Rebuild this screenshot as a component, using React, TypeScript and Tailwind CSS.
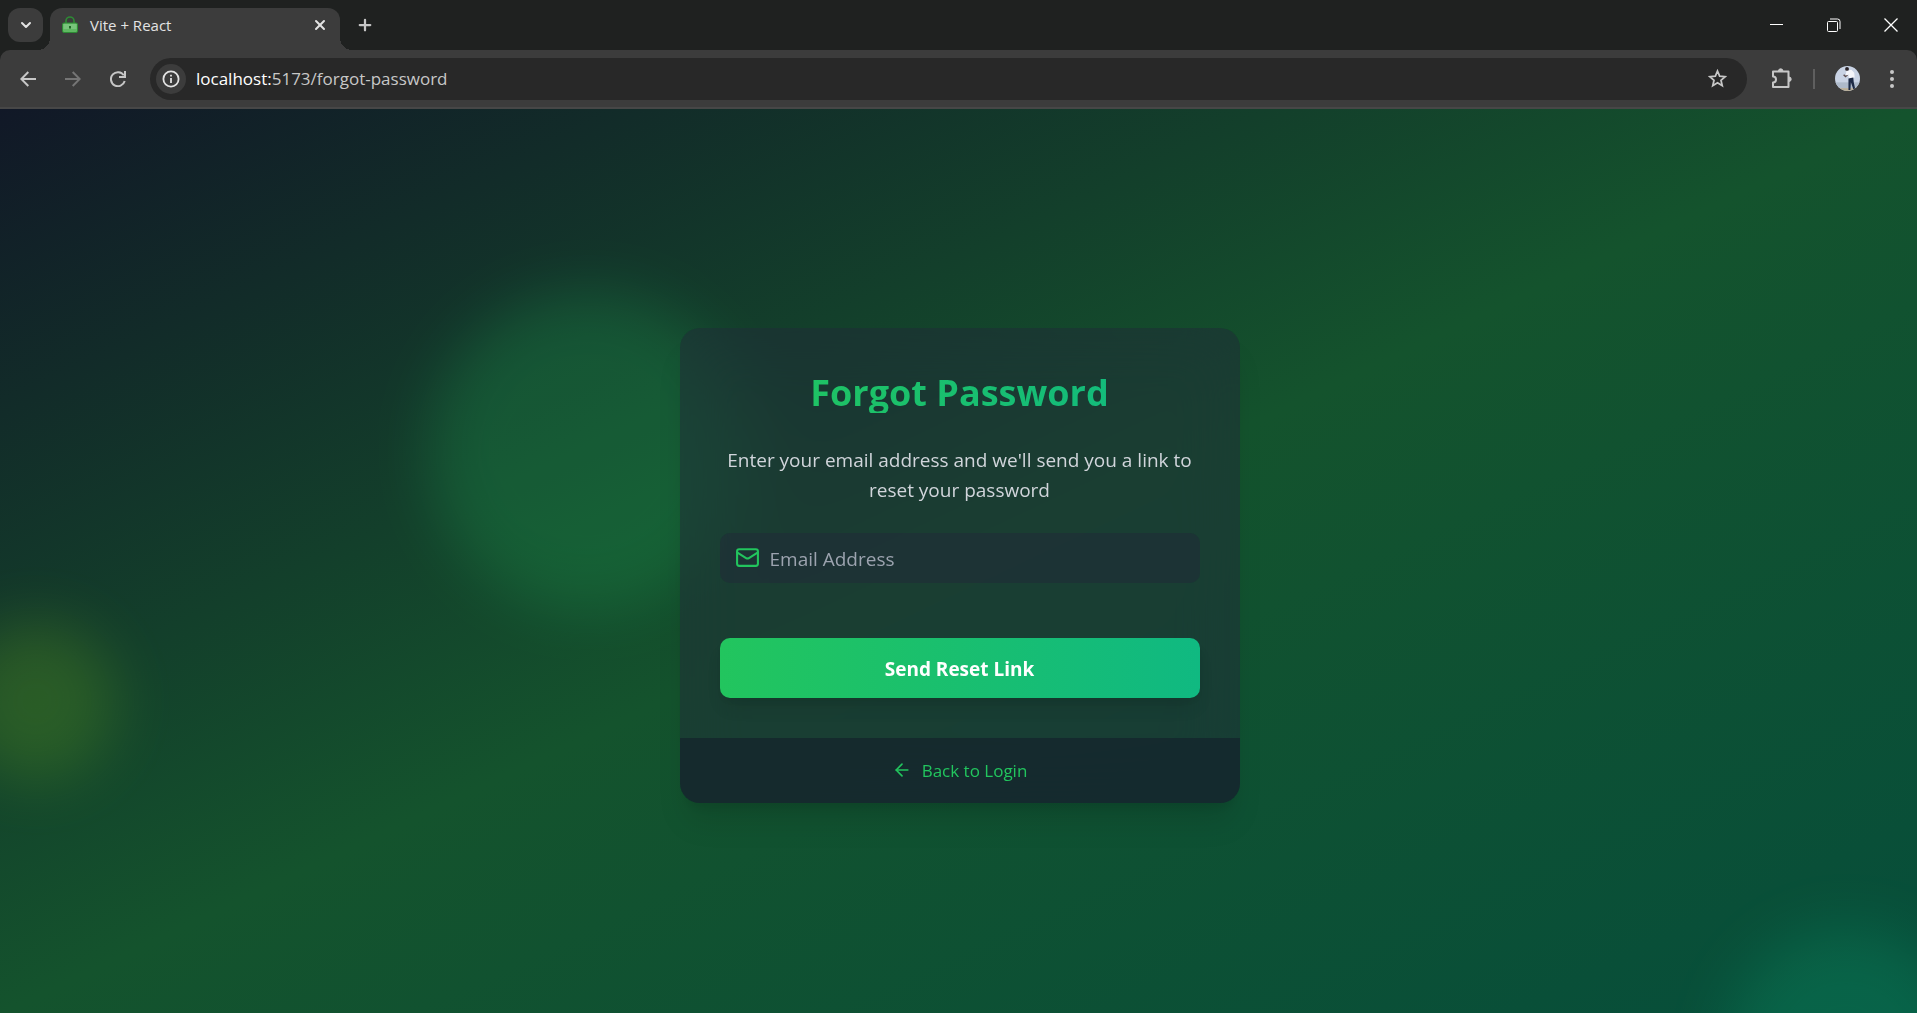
import React from "react";
import { ArrowLeft, Mail, ChevronDown, X, Plus } from "lucide-react";

function TabStrip() {
  return (
    <div className="flex h-[50px] items-end bg-[#1f2120]">
      <button aria-label="Search tabs" className="mb-2 ml-2 flex h-[34px] w-[35px] items-center justify-center rounded-xl bg-[#3c3c3c] text-[#e3e3e3]">
        <ChevronDown className="size-4" strokeWidth={3} />
      </button>
      <div className="flex h-[42px] items-end">
        <span className="size-[7px] bg-[#1f2120]" />
        <div className="relative flex h-full w-[290px] items-center rounded-t-xl bg-[#3c3c3c] px-3 pb-2">
          <span className="absolute bottom-0 -left-3 size-3 bg-[radial-gradient(circle_at_0_0,transparent_12px,#3c3c3c_12px)]" />
          <span className="absolute -right-3 bottom-0 size-3 bg-[radial-gradient(circle_at_100%_0,transparent_12px,#3c3c3c_12px)]" />
          <svg className="h-[18px] w-4" viewBox="0 0 16 18" fill="none">
            <path d="M4 8V5a4 4 0 0 1 8 0v3" stroke="#2e8b35" strokeWidth="1.6" />
            <rect x="0.5" y="7" width="15" height="9.5" rx="1.5" fill="#5fb862" stroke="#2e8b35" />
            <rect x="1.500" y="8" width="13" height="5" fill="#78c47b" />
            <rect x="7" y="10" width="2" height="2.500" fill="#1f6b26" />
          </svg>
          <span className="ml-3 flex-1 text-[15px] text-[#e3e3e3]">Vite + React</span>
          <button aria-label="Close tab" className="text-[#e3e3e3]">
            <X className="size-4" strokeWidth={3} />
          </button>
        </div>
        <button aria-label="New tab" className="ml-4 flex h-full w-[18px] items-center pb-2 text-[#c7c7c7]">
          <Plus className="size-[18px]" strokeWidth={3} />
        </button>
      </div>
      <div className="ml-auto flex h-full items-center gap-[43px] pr-[19px] pb-px text-white">
        <button aria-label="Minimize">
          <svg className="size-[14px]" viewBox="0 0 14 14" stroke="currentColor"><path d="M0 6.500h13" /></svg>
        </button>
        <button aria-label="Restore">
          <svg className="size-[14px]" viewBox="0 0 14 14" fill="none" stroke="currentColor"><rect x="0.5" y="3.5" width="10" height="10" rx="1" /><path d="M3 1h7.500a2.500 2.500 0 0 1 2.500 2.500V11" /></svg>
        </button>
        <button aria-label="Close">
          <svg className="size-[14px]" viewBox="0 0 14 14" stroke="currentColor" strokeWidth="1.300"><path d="M.5.5l13 13M13.500.5l-13 13" /></svg>
        </button>
      </div>
    </div>
  );
}

function Toolbar() {
  return (
    <div className="bg-[#1f2120]">
      <div className="flex h-[59px] items-center rounded-t-[10px] border-b-2 border-[#474747] bg-[#3c3c3c] text-[#c7c7c7]">
        <div className="flex w-[150px] items-center gap-[29px] pl-5">
          <button aria-label="Back">
            <svg className="size-4" viewBox="0 0 16 16" fill="none" stroke="currentColor" strokeWidth="2"><path d="M16 8H1.500M8.300 1L1.300 8l7 7" /></svg>
          </button>
          <button aria-label="Forward" className="text-[#757575]">
            <svg className="size-4" viewBox="0 0 16 16" fill="none" stroke="currentColor" strokeWidth="2"><path d="M0 8h14.500M7.700 1l7 7-7 7" /></svg>
          </button>
          <button aria-label="Reload">
            <svg className="size-4" viewBox="0 0 16 16" fill="none" stroke="currentColor" strokeWidth="2"><path d="M13.800 4.300A7 7 0 1 0 14.700 10M15 0v6H9" /></svg>
          </button>
        </div>
        <div className="flex h-[42px] flex-1 items-center rounded-full bg-[#282828] pr-5 pl-[6px]">
          <button aria-label="Site information" className="flex size-[30px] items-center justify-center rounded-full bg-[#3c3c3c] text-[#e3e3e3]">
            <svg className="size-[18px]" viewBox="0 0 18 18" fill="none" stroke="currentColor" strokeWidth="1.800"><circle cx="9" cy="9" r="7.600" /><path d="M9 8v5M9 4.800v1.700" /></svg>
          </button>
          <p className="ml-[10px] flex-1 text-[17px] text-[#c7c7c7]"><span className="text-white">localhost:</span>5173/forgot-password</p>
          <button aria-label="Bookmark">
            <svg className="size-[19px]" viewBox="0 0 24 24" fill="none" stroke="currentColor" strokeWidth="2.200"><path d="M12 2.500l2.700 6.500 7 .6-5.300 4.600 1.600 6.900-6-3.700-6 3.700 1.600-6.900L2.300 9.600l7-.6z" /></svg>
          </button>
        </div>
        <div className="flex w-[170px] items-center pl-6">
          <button aria-label="Extensions">
            <svg className="size-[21px]" viewBox="0 0 21 21" fill="none" stroke="currentColor" strokeWidth="2" strokeLinejoin="round"><path d="M2 3.500h15.500v15.500H2V14.500a3 3 0 0 0 0-6z" /><path d="M7.500 3a2.200 2.200 0 0 1 4.400 0zM18 9a2.200 2.200 0 0 1 0 4.400z" fill="currentColor" strokeWidth="1" /></svg>
          </button>
          <span className="ml-[21px] h-5 w-[2px] bg-[#5f5f5f]" />
          <button aria-label="Profile" className="ml-5">
            <svg className="size-[25px] rounded-full" viewBox="0 0 26 26">
              <rect width="26" height="26" fill="#c9d3e4" />
              <rect y="17" width="26" height="6" fill="#aebaca" />
              <rect y="23" width="26" height="3" fill="#b8ad96" />
              <path d="M9 9l2 2 3-3" stroke="#5a4a4c" strokeWidth="1.500" fill="none" />
              <path d="M12 5l5-1 3 3 .5 5-6 1.500L14 9l-3 1z" fill="#f4f5fa" />
              <circle cx="12.500" cy="3" r="2" fill="#2a2327" />
              <path d="M14 13l5-1 .5 5 1.500 7h-2l-2.500-7-.5 8h-2z" fill="#1d2a45" />
            </svg>
          </button>
          <button aria-label="Menu" className="ml-[30px]">
            <svg className="h-[18px] w-1" viewBox="0 0 4 18" fill="currentColor"><circle cx="2" cy="2" r="2" /><circle cx="2" cy="9" r="2" /><circle cx="2" cy="16" r="2" /></svg>
          </button>
        </div>
      </div>
    </div>
  );
}

function ForgotPasswordCard() {
  return (
    <section className="relative w-full max-w-[560px] overflow-hidden rounded-[20px] bg-[#1f2937]/50 shadow-[0_25px_30px_-6px_rgba(0,0,0,0.1),0_10px_12px_-6px_rgba(0,0,0,0.1)] backdrop-blur-[30px]">
      <form className="p-10" onSubmit={(e) => e.preventDefault()}>
        <h1 className="mb-[30px] bg-linear-to-r/srgb from-[#22c55e] to-[#10b981] bg-clip-text pt-1 text-center text-[36px] leading-[41px] font-bold text-transparent">
          Forgot Password
        </h1>
        <p className="mb-7 pt-0.5 text-center text-[19px] leading-[30px] text-[#d1d5db]">
          Enter your email address and we'll send you a link to reset your password
        </p>
        <label className="mb-[55px] flex h-[50px] items-center gap-[10px] rounded-[10px] bg-[#1f2937]/50 pl-[15px]">
          <Mail className="size-[25px] text-[#22c55e]" />
          <input type="email" placeholder="Email Address" aria-label="Email Address" className="h-full min-w-0 flex-1 bg-transparent pt-0.5 text-[19px] text-white outline-none placeholder:text-[#9ca3af]" />
        </label>
        <button className="h-[60px] w-full rounded-[10px] bg-linear-to-r/srgb from-[#22c55e] to-[#10b981] pt-1 text-[19px] font-bold text-white shadow-[0_12px_18px_-4px_rgba(0,0,0,0.1),0_5px_8px_-5px_rgba(0,0,0,0.1)]">
          Send Reset Link
        </button>
      </form>
      <div className="flex h-[65px] items-center justify-center bg-[#111827]/50">
        <a href="/login" className="flex items-center gap-[10px] text-[17px] text-[#22c55e]">
          <ArrowLeft className="size-5" />
          <span className="pt-0.5">Back to Login</span>
        </a>
      </div>
    </section>
  );
}

export default function App() {
  return (
    <div className="flex min-h-screen flex-col font-['Open_Sans','Noto_Sans',sans-serif]">
      <header>
        <TabStrip />
        <Toolbar />
      </header>
      <main className="relative flex flex-1 items-center justify-center overflow-hidden bg-[linear-gradient(to_bottom_right,#111827,#14532d,#064e3b)] pt-2 pl-0.5">
        <div className="absolute top-[182px] left-[428px] size-80 rounded-full bg-[#22c55e] opacity-20 blur-[30px]" />
        <div className="absolute top-[820px] left-[1726px] size-60 rounded-full bg-[#10b981] opacity-20 blur-[30px]" />
        <div className="absolute top-[512px] -left-[44px] size-40 rounded-full bg-[#84cc16] opacity-20 blur-[30px]" />
        <ForgotPasswordCard />
      </main>
    </div>
  );
}
